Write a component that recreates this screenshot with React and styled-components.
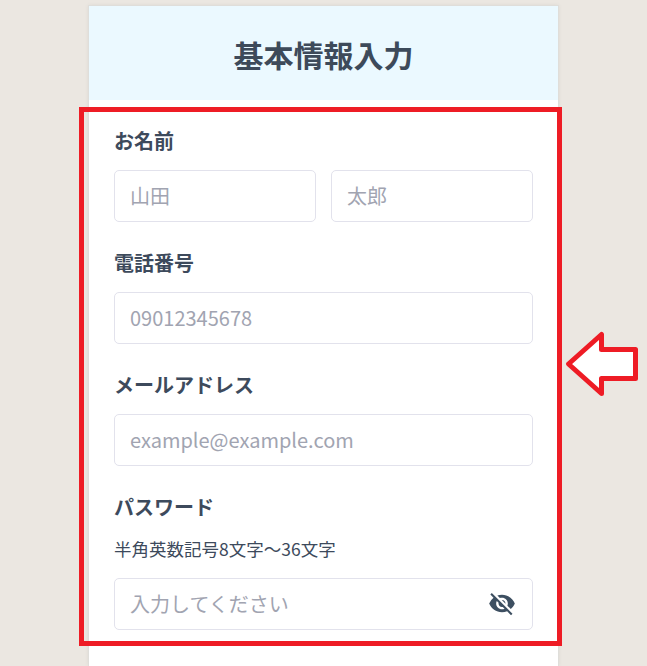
import styled, { createGlobalStyle } from "styled-components";
import { MdVisibilityOff } from "react-icons/md";

const GlobalStyle = createGlobalStyle`
  html, body {
    margin: 0;
    height: 666px;
    overflow: hidden;
    background-color: #ebe7e1;
  }
  body {
    font-family: "Noto Sans CJK JP", "Noto Sans", sans-serif;
    color: #3d4a5c;
  }
`;

const Page = styled.div`
  position: relative;
  display: flex;
  justify-content: center;
  padding-top: 5px;
  height: 661px;
`;

const Card = styled.main`
  width: 471px;
  box-sizing: border-box;
  background-color: #fff;
  border: 1px solid #dfdeda;
  border-bottom: none;
  box-shadow: 0 0 4px rgba(0, 0, 0, 0.06);
`;

const Header = styled.h1`
  margin: 0;
  height: 94px;
  padding-top: 2px;
  box-sizing: border-box;
  display: flex;
  align-items: center;
  justify-content: center;
  background-color: #ebf9ff;
  font-size: 30px;
  font-weight: 700;
  color: #3d4a5a;
`;

const Form = styled.form`
  display: flex;
  flex-direction: column;
  gap: 29px;
  padding: 29px 25px 0;
`;

const Field = styled.div`
  display: flex;
  flex-direction: column;
`;

const Label = styled.label`
  font-size: 20px;
  font-weight: 700;
  line-height: 23px;
  margin-bottom: 18px;
`;

const Hint = styled.p`
  margin: 1px 0 17px;
  font-size: 17.5px;
  line-height: 24px;
`;

const Row = styled.div`
  display: flex;
  gap: 15px;
`;

const InputWrap = styled.div`
  position: relative;
  flex: 1;
`;

const Input = styled.input`
  display: block;
  width: 100%;
  height: 52px;
  box-sizing: border-box;
  padding: 0 15px 1px;
  border: 1px solid #e2e2ec;
  border-radius: 5px;
  background-color: #fff;
  font-family: inherit;
  font-size: 20px;
  color: #3d4a5c;

  &::placeholder {
    color: #a1a4b1;
    opacity: 1;
  }
`;

const EyeButton = styled.button`
  position: absolute;
  top: 11px;
  right: 17px;
  width: 28px;
  height: 28px;
  padding: 0;
  border: none;
  background: none;
  color: #3d4f61;
  display: flex;
  align-items: center;
  justify-content: center;
`;

const Highlight = styled.div`
  position: absolute;
  left: 79px;
  top: 107px;
  width: 483px;
  height: 539px;
  box-sizing: border-box;
  border: 5px solid #ee1c25;
  pointer-events: none;
`;

const Arrow = styled.svg`
  position: absolute;
  left: 564px;
  top: 329px;
`;

export default function App() {
  return (
    <>
      <GlobalStyle />
      <Page>
        <Card>
          <Header>基本情報入力</Header>
          <Form>
            <Field>
              <Label>お名前</Label>
              <Row>
                <InputWrap>
                  <Input placeholder="山田" />
                </InputWrap>
                <InputWrap>
                  <Input placeholder="太郎" />
                </InputWrap>
              </Row>
            </Field>
            <Field>
              <Label>電話番号</Label>
              <Input placeholder="09012345678" />
            </Field>
            <Field>
              <Label>メールアドレス</Label>
              <Input placeholder="example@example.com" />
            </Field>
            <Field>
              <Label>パスワード</Label>
              <Hint>半角英数記号8文字〜36文字</Hint>
              <InputWrap>
                <Input placeholder="入力してください" />
                <EyeButton type="button" aria-label="パスワードを表示">
                  <MdVisibilityOff size={31} />
                </EyeButton>
              </InputWrap>
            </Field>
          </Form>
        </Card>
        <Highlight />
        <Arrow width="78" height="72" viewBox="0 0 78 72">
          <path
            d="M4.5 35 L37.5 5.5 L37.5 20.5 L71.5 20.5 L71.5 49.5 L37.5 49.5 L37.5 64.5 Z"
            fill="#fff"
            stroke="#ee1c25"
            strokeWidth="5"
            strokeLinejoin="round"
          />
        </Arrow>
      </Page>
    </>
  );
}
